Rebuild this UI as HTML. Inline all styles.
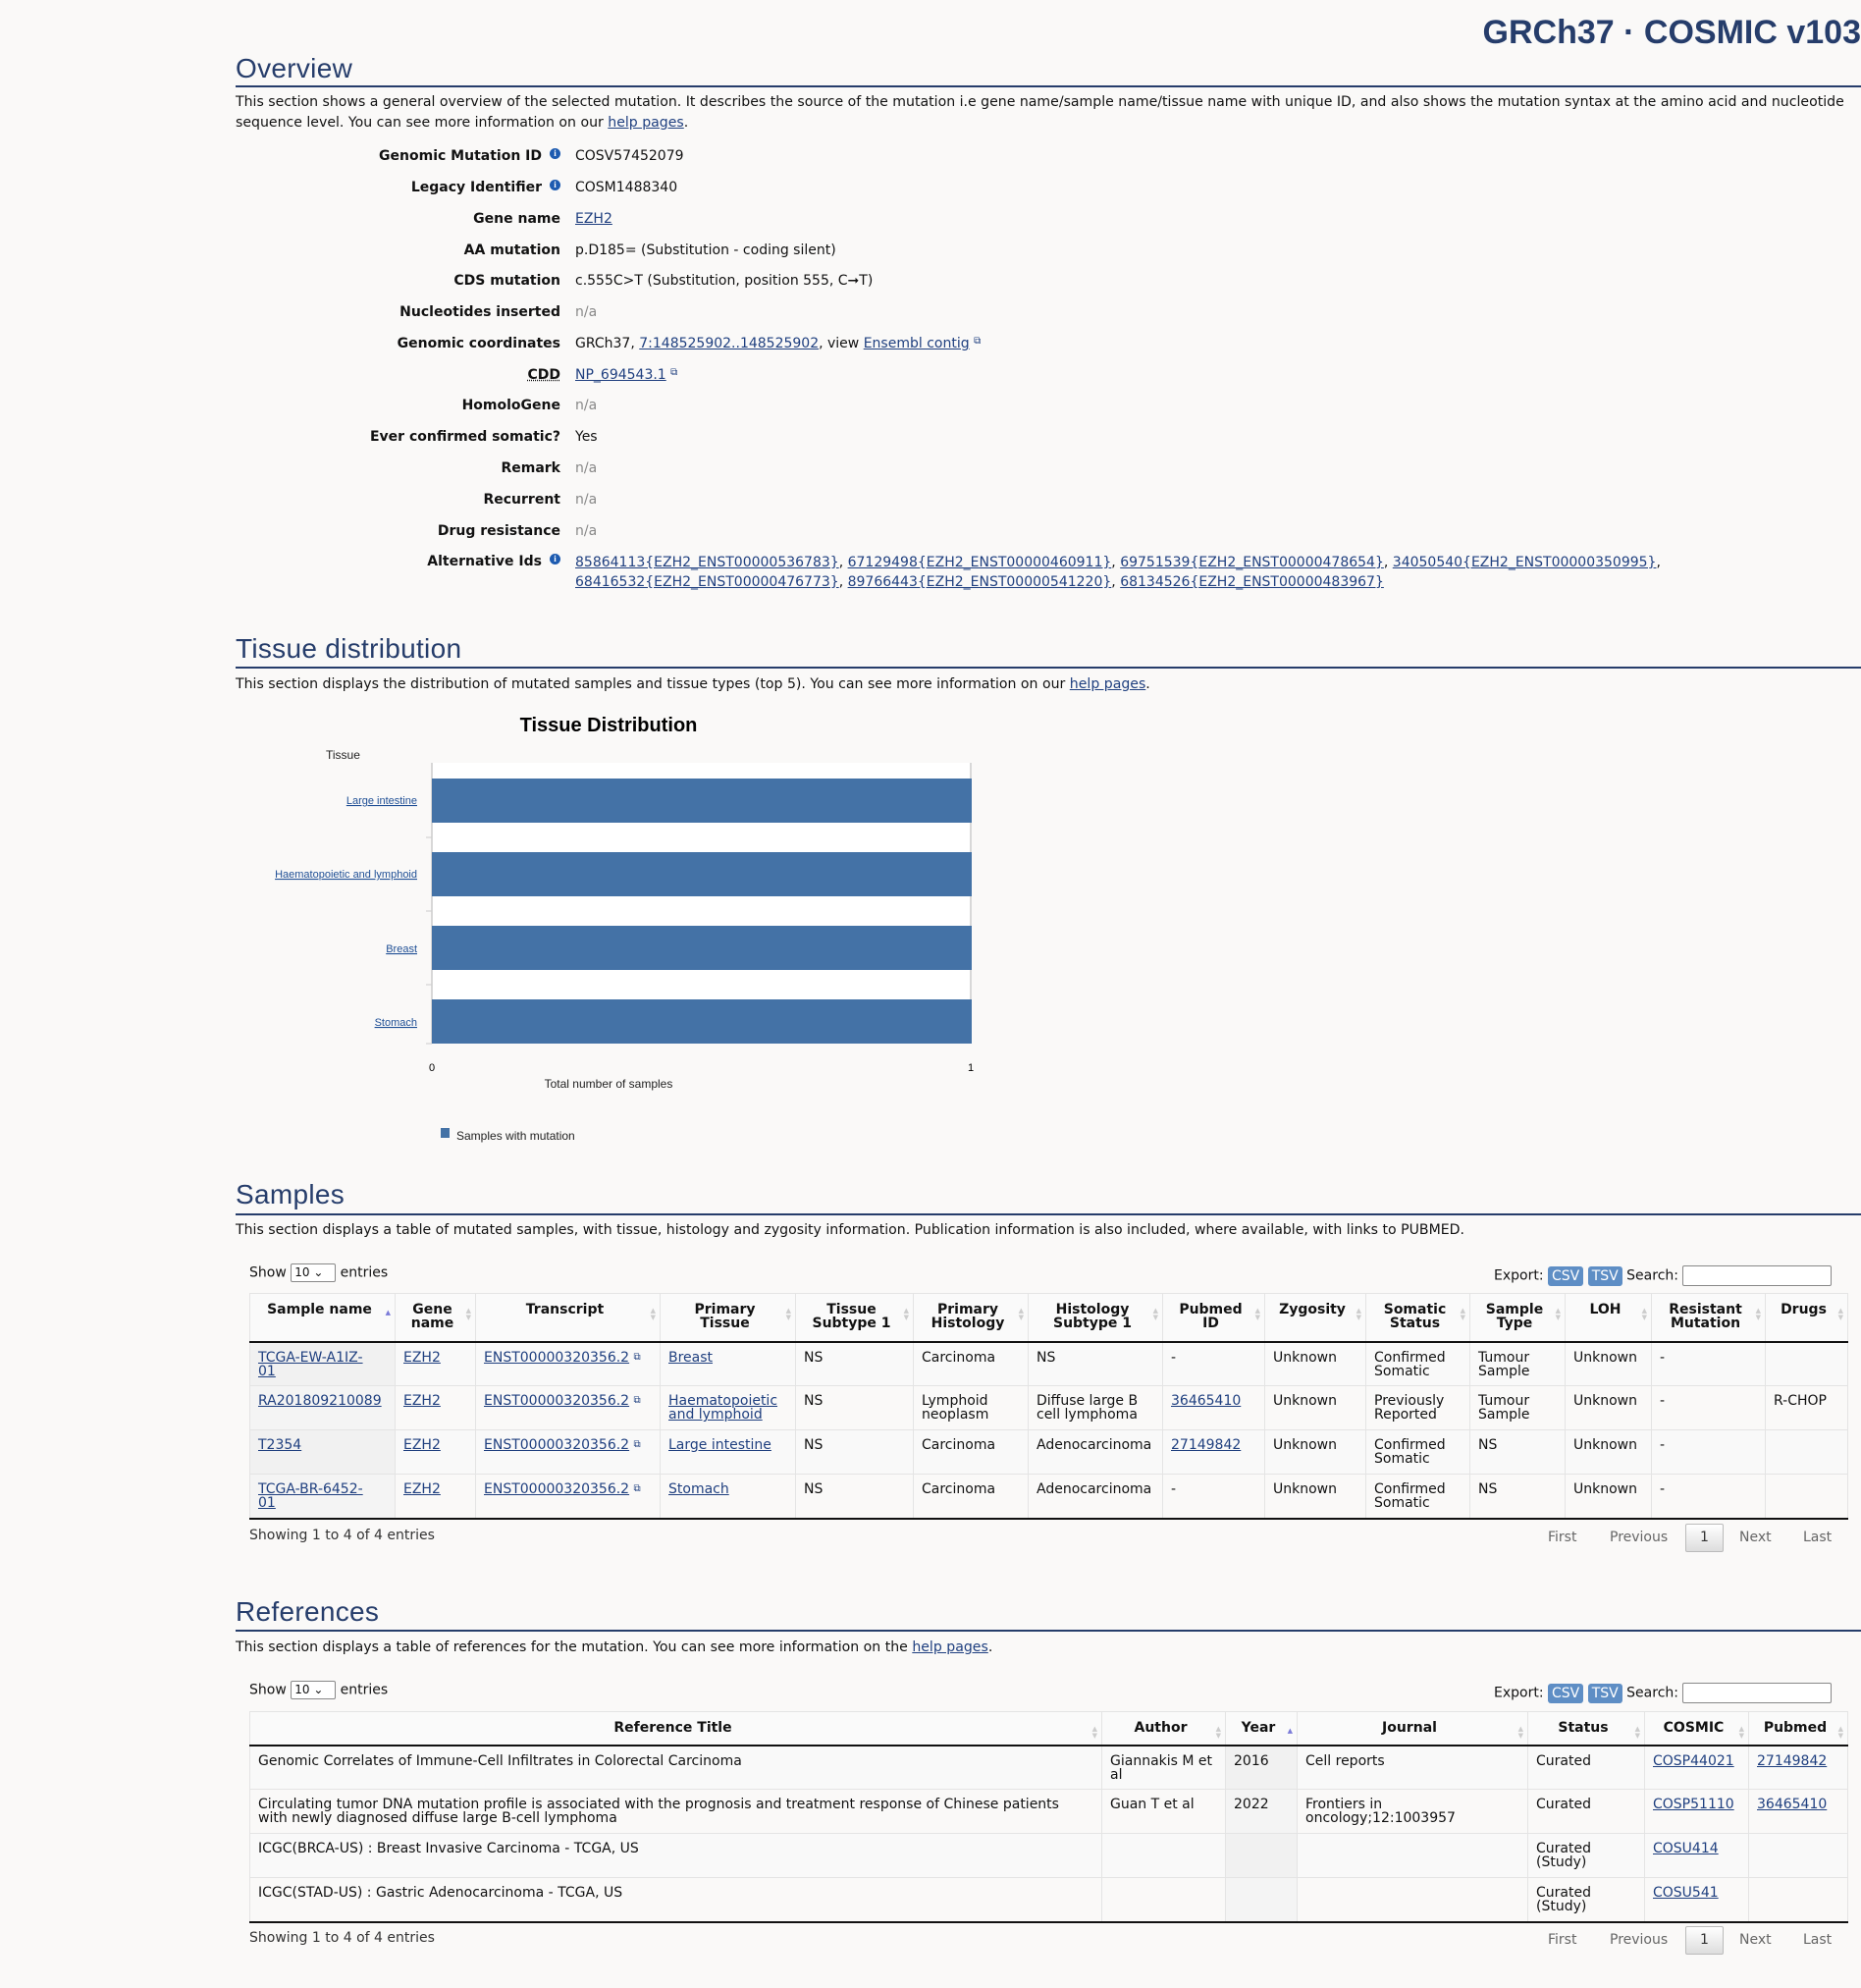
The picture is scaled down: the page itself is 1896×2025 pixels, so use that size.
<!DOCTYPE html>
<html><head><meta charset="utf-8">
<style>
*{box-sizing:border-box}
body{margin:0;width:1896px;height:2025px;background:#faf9f8;font-family:"DejaVu Sans",Verdana,sans-serif;font-size:14px;color:#111;position:relative;overflow:hidden}
.a{position:absolute}
a{color:#1f3f7f;text-decoration:underline}
h2{position:absolute;left:240px;margin:0;font-family:"Liberation Sans",sans-serif;font-weight:normal;font-size:28px;color:#263d6b;letter-spacing:0.3px}
.rule{position:absolute;left:240px;width:1656px;height:2px;background:#263d6b}
.p{position:absolute;left:240px;width:1650px;line-height:21px;font-size:14.1px}
.lab{position:absolute;right:1325px;font-weight:bold;text-align:right;font-size:14px}
.val{position:absolute;left:586px;font-size:14px}
.na{color:#888}
.i{display:inline-block;width:11px;height:11px;border-radius:50%;background:#1d5bb0;color:#fff;font-size:9px;line-height:11px;text-align:center;vertical-align:top;margin-left:8px;font-weight:bold;font-family:"Liberation Serif",serif}
.ext{font-size:10px;vertical-align:top;color:#1f3f7f}
table{position:absolute;border-collapse:collapse;table-layout:fixed;font-size:14px;line-height:14px}
th{font-weight:bold;border-left:1px solid #e4e4e4;border-top:1px solid #e4e4e4;border-bottom:2px solid #111;padding:9px 14px 8px 8px;text-align:center;vertical-align:top;position:relative;background:#fafafa}
th:after{content:"▲\A▼";white-space:pre;position:absolute;right:4px;top:14px;font-size:7px;line-height:7px;color:#ccc}
th.s:after{content:"▲";color:#7a7ad8;top:16px}
td{border-left:1px solid #e4e4e4;border-bottom:1px solid #e4e4e4;padding:8px 8px 1px;vertical-align:top;height:45px}
tr.o td{background:#f9f9f9}
td.sc{background:#f1f1f1!important}
tr.e td.sc{background:#f4f4f4!important}
tr:last-child td{border-bottom:2px solid #111}
td:last-child,th:last-child{border-right:1px solid #e4e4e4}
.btn{display:inline-block;background:#5e8ec5;color:#fff;border-radius:3px;padding:2px 4px;font-size:14px}
.pg{position:absolute;font-size:14px;color:#666}
.sel{display:inline-block;border:1px solid #888;border-radius:2px;width:46px;height:19px;font-size:12px;line-height:17px;padding-left:3px;background:#fff;vertical-align:middle}
</style></head><body>
<div class="a" style="right:0;top:14px;font-family:'Liberation Sans',sans-serif;font-size:34px;font-weight:bold;color:#263d6b">GRCh37 · COSMIC v103</div>

<h2 style="top:54px">Overview</h2>
<div class="rule" style="top:87px"></div>
<div class="p" style="top:94px">This section shows a general overview of the selected mutation. It describes the source of the mutation i.e gene name/sample name/tissue name with unique ID, and also shows the mutation syntax at the amino acid and nucleotide sequence level. You can see more information on our <a>help pages</a>.</div>

<div class="lab" style="top:151px">Genomic Mutation ID<span class="i">i</span></div><div class="val" style="top:151px">COSV57452079</div>
<div class="lab" style="top:183px">Legacy Identifier<span class="i">i</span></div><div class="val" style="top:183px">COSM1488340</div>
<div class="lab" style="top:215px">Gene name</div><div class="val" style="top:215px"><a>EZH2</a></div>
<div class="lab" style="top:247px">AA mutation</div><div class="val" style="top:247px">p.D185= (Substitution - coding silent)</div>
<div class="lab" style="top:278px">CDS mutation</div><div class="val" style="top:278px">c.555C&gt;T (Substitution, position 555, C➞T)</div>
<div class="lab" style="top:310px">Nucleotides inserted</div><div class="val na" style="top:310px">n/a</div>
<div class="lab" style="top:342px">Genomic coordinates</div><div class="val" style="top:342px">GRCh37, <a>7:148525902..148525902</a>, view <a>Ensembl contig</a> <span class="ext">⧉</span></div>
<div class="lab" style="top:374px;text-decoration:underline dotted">CDD</div><div class="val" style="top:374px"><a>NP_694543.1</a> <span class="ext">⧉</span></div>
<div class="lab" style="top:405px">HomoloGene</div><div class="val na" style="top:405px">n/a</div>
<div class="lab" style="top:437px">Ever confirmed somatic?</div><div class="val" style="top:437px">Yes</div>
<div class="lab" style="top:469px">Remark</div><div class="val na" style="top:469px">n/a</div>
<div class="lab" style="top:501px">Recurrent</div><div class="val na" style="top:501px">n/a</div>
<div class="lab" style="top:533px">Drug resistance</div><div class="val na" style="top:533px">n/a</div>
<div class="lab" style="top:564px">Alternative Ids<span class="i">i</span></div>
<div class="val" style="top:563px;line-height:20px;width:1300px"><a>85864113{EZH2_ENST00000536783}</a>, <a>67129498{EZH2_ENST00000460911}</a>, <a>69751539{EZH2_ENST00000478654}</a>, <a>34050540{EZH2_ENST00000350995}</a>,<br><a>68416532{EZH2_ENST00000476773}</a>, <a>89766443{EZH2_ENST00000541220}</a>, <a>68134526{EZH2_ENST00000483967}</a></div>

<h2 style="top:645px">Tissue distribution</h2>
<div class="rule" style="top:679px"></div>
<div class="p" style="top:687px">This section displays the distribution of mutated samples and tissue types (top 5). You can see more information on our <a>help pages</a>.</div>

<svg class="a" style="left:0;top:0" width="1100" height="1200" font-family="Liberation Sans, Arial, sans-serif">
<rect x="440" y="777" width="550" height="286" fill="#fff"/>
<text x="620" y="745" font-size="20" font-weight="bold" text-anchor="middle" fill="#000">Tissue Distribution</text>
<text x="332" y="773" font-size="12" fill="#222">Tissue</text>
<line x1="440" y1="777" x2="440" y2="1063" stroke="#ccc" stroke-width="1.5"/>
<line x1="989" y1="777" x2="989" y2="1063" stroke="#ccc" stroke-width="1.5"/>
<g fill="#4472a6">
<rect x="440" y="793" width="550" height="45"/>
<rect x="440" y="868" width="550" height="45"/>
<rect x="440" y="943" width="550" height="45"/>
<rect x="440" y="1018" width="550" height="45"/>
</g>
<g stroke="#ccc"><line x1="434" y1="853" x2="440" y2="853"/><line x1="434" y1="928" x2="440" y2="928"/><line x1="434" y1="1003" x2="440" y2="1003"/><line x1="434" y1="1063" x2="440" y2="1063"/></g>
<g font-size="11" fill="#1f4f95" text-anchor="end" text-decoration="underline">
<text x="425" y="819">Large intestine</text>
<text x="425" y="894">Haematopoietic and lymphoid</text>
<text x="425" y="970">Breast</text>
<text x="425" y="1045">Stomach</text>
</g>
<text x="440" y="1091" font-size="11" text-anchor="middle">0</text>
<text x="989" y="1091" font-size="11" text-anchor="middle">1</text>
<text x="620" y="1108" font-size="12" text-anchor="middle" fill="#222">Total number of samples</text>
<rect x="449" y="1149" width="9" height="10" fill="#4472a6"/>
<text x="465" y="1161" font-size="12" fill="#222">Samples with mutation</text>
</svg>

<h2 style="top:1201px">Samples</h2>
<div class="rule" style="top:1236px"></div>
<div class="p" style="top:1243px">This section displays a table of mutated samples, with tissue, histology and zygosity information. Publication information is also included, where available, with links to PUBMED.</div>

<div class="a" style="left:254px;top:1287px;font-size:14px">Show <span class="sel">10 ⌄</span> entries</div>
<div class="a" style="left:1522px;top:1289px;font-size:14px">Export: <span class="btn">CSV</span> <span class="btn">TSV</span> Search: <span style="display:inline-block;width:152px;height:21px;border:1px solid #888;background:#fff;vertical-align:middle;border-radius:2px"></span></div>

<table style="left:254px;top:1317px;width:1628px">
<colgroup><col style="width:148px"><col style="width:82px"><col style="width:188px"><col style="width:138px"><col style="width:120px"><col style="width:117px"><col style="width:137px"><col style="width:104px"><col style="width:103px"><col style="width:106px"><col style="width:97px"><col style="width:88px"><col style="width:116px"><col style="width:84px"></colgroup>
<tr style="height:49px"><th class="s">Sample name</th><th>Gene name</th><th>Transcript</th><th>Primary Tissue</th><th>Tissue Subtype 1</th><th>Primary Histology</th><th>Histology Subtype 1</th><th>Pubmed ID</th><th>Zygosity</th><th>Somatic Status</th><th>Sample Type</th><th>LOH</th><th>Resistant Mutation</th><th>Drugs</th></tr>
<tr class="o"><td class="sc"><a>TCGA-EW-A1IZ-<br>01</a></td><td><a>EZH2</a></td><td><a>ENST00000320356.2</a> <span class="ext">⧉</span></td><td><a>Breast</a></td><td>NS</td><td>Carcinoma</td><td>NS</td><td>-</td><td>Unknown</td><td>Confirmed Somatic</td><td>Tumour Sample</td><td>Unknown</td><td>-</td><td></td></tr>
<tr class="e"><td class="sc"><a>RA201809210089</a></td><td><a>EZH2</a></td><td><a>ENST00000320356.2</a> <span class="ext">⧉</span></td><td><a>Haematopoietic and lymphoid</a></td><td>NS</td><td>Lymphoid neoplasm</td><td>Diffuse large B cell lymphoma</td><td><a>36465410</a></td><td>Unknown</td><td>Previously Reported</td><td>Tumour Sample</td><td>Unknown</td><td>-</td><td>R-CHOP</td></tr>
<tr class="o"><td class="sc"><a>T2354</a></td><td><a>EZH2</a></td><td><a>ENST00000320356.2</a> <span class="ext">⧉</span></td><td><a>Large intestine</a></td><td>NS</td><td>Carcinoma</td><td>Adenocarcinoma</td><td><a>27149842</a></td><td>Unknown</td><td>Confirmed Somatic</td><td>NS</td><td>Unknown</td><td>-</td><td></td></tr>
<tr class="e"><td class="sc"><a>TCGA-BR-6452-<br>01</a></td><td><a>EZH2</a></td><td><a>ENST00000320356.2</a> <span class="ext">⧉</span></td><td><a>Stomach</a></td><td>NS</td><td>Carcinoma</td><td>Adenocarcinoma</td><td>-</td><td>Unknown</td><td>Confirmed Somatic</td><td>NS</td><td>Unknown</td><td>-</td><td></td></tr>
</table>
<div class="a" style="left:254px;top:1556px;font-size:14px;color:#333">Showing 1 to 4 of 4 entries</div>
<div class="pg" style="left:1577px;top:1558px">First</div>
<div class="pg" style="left:1640px;top:1558px">Previous</div>
<div class="pg" style="left:1717px;top:1552px;width:39px;height:29px;border:1px solid #bbb;border-radius:2px;background:linear-gradient(#fff,#ddd);text-align:center;line-height:27px;color:#333">1</div>
<div class="pg" style="left:1772px;top:1558px">Next</div>
<div class="pg" style="left:1837px;top:1558px">Last</div>

<h2 style="top:1626px">References</h2>
<div class="rule" style="top:1660px"></div>
<div class="p" style="top:1668px">This section displays a table of references for the mutation. You can see more information on the <a>help pages</a>.</div>

<div class="a" style="left:254px;top:1712px;font-size:14px">Show <span class="sel">10 ⌄</span> entries</div>
<div class="a" style="left:1522px;top:1714px;font-size:14px">Export: <span class="btn">CSV</span> <span class="btn">TSV</span> Search: <span style="display:inline-block;width:152px;height:21px;border:1px solid #888;background:#fff;vertical-align:middle;border-radius:2px"></span></div>

<table style="left:254px;top:1743px;width:1628px">
<colgroup><col style="width:868px"><col style="width:126px"><col style="width:73px"><col style="width:235px"><col style="width:119px"><col style="width:106px"><col style="width:101px"></colgroup>
<tr style="height:34px"><th>Reference Title</th><th>Author</th><th class="s">Year</th><th>Journal</th><th>Status</th><th>COSMIC</th><th>Pubmed</th></tr>
<tr class="o"><td>Genomic Correlates of Immune-Cell Infiltrates in Colorectal Carcinoma</td><td>Giannakis M et al</td><td class="sc">2016</td><td>Cell reports</td><td>Curated</td><td><a>COSP44021</a></td><td><a>27149842</a></td></tr>
<tr class="e"><td>Circulating tumor DNA mutation profile is associated with the prognosis and treatment response of Chinese patients<br>with newly diagnosed diffuse large B-cell lymphoma</td><td>Guan T et al</td><td class="sc">2022</td><td>Frontiers in oncology;12:1003957</td><td>Curated</td><td><a>COSP51110</a></td><td><a>36465410</a></td></tr>
<tr class="o"><td>ICGC(BRCA-US) : Breast Invasive Carcinoma - TCGA, US</td><td></td><td class="sc"></td><td></td><td>Curated (Study)</td><td><a>COSU414</a></td><td></td></tr>
<tr class="e"><td>ICGC(STAD-US) : Gastric Adenocarcinoma - TCGA, US</td><td></td><td class="sc"></td><td></td><td>Curated (Study)</td><td><a>COSU541</a></td><td></td></tr>
</table>
<div class="a" style="left:254px;top:1966px;font-size:14px;color:#333">Showing 1 to 4 of 4 entries</div>
<div class="pg" style="left:1577px;top:1968px">First</div>
<div class="pg" style="left:1640px;top:1968px">Previous</div>
<div class="pg" style="left:1717px;top:1962px;width:39px;height:29px;border:1px solid #bbb;border-radius:2px;background:linear-gradient(#fff,#ddd);text-align:center;line-height:27px;color:#333">1</div>
<div class="pg" style="left:1772px;top:1968px">Next</div>
<div class="pg" style="left:1837px;top:1968px">Last</div>
</body></html>
